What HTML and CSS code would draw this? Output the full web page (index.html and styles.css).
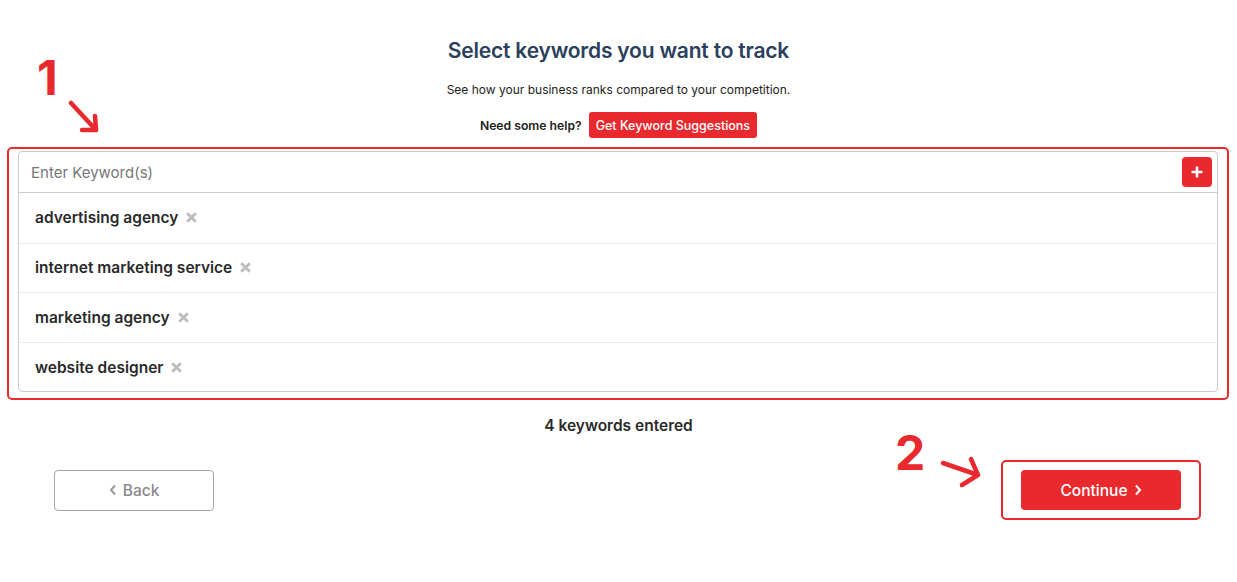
FILE: index.html
```html
<!DOCTYPE html>
<html lang="en">
<head>
<meta charset="utf-8">
<title>Select keywords</title>
<link rel="stylesheet" href="styles.css">
</head>
<body>
<div class="page">
  <header class="head">
    <h1 class="title">Select keywords you want to track</h1>
    <p class="subtitle">See how your business ranks compared to your competition.</p>
    <div class="help">
      <span class="help-label">Need some help?</span>
      <button class="suggest">Get Keyword Suggestions</button>
    </div>
  </header>

  <div class="highlight">
    <div class="kw-box">
      <div class="kw-input-row">
        <span class="placeholder">Enter Keyword(s)</span>
        <button class="add" aria-label="Add">
          <svg width="14" height="14" viewBox="0 0 14 14"><path d="M7 1.5v11M1.5 7h11" stroke="#fff" stroke-width="2.6" stroke-linecap="butt"/></svg>
        </button>
      </div>
      <ul class="kw-list">
        <li class="kw"><span>advertising agency</span><svg class="rm" viewBox="0 0 12 12"><path d="M2 2l8 8M10 2l-8 8" stroke="#bdbdbd" stroke-width="2.6"/></svg></li>
        <li class="kw"><span>internet marketing service</span><svg class="rm" viewBox="0 0 12 12"><path d="M2 2l8 8M10 2l-8 8" stroke="#bdbdbd" stroke-width="2.6"/></svg></li>
        <li class="kw"><span>marketing agency</span><svg class="rm" viewBox="0 0 12 12"><path d="M2 2l8 8M10 2l-8 8" stroke="#bdbdbd" stroke-width="2.6"/></svg></li>
        <li class="kw"><span>website designer</span><svg class="rm" viewBox="0 0 12 12"><path d="M2 2l8 8M10 2l-8 8" stroke="#bdbdbd" stroke-width="2.6"/></svg></li>
      </ul>
    </div>
  </div>

  <p class="count">4 keywords entered</p>

  <div class="nav">
    <button class="back">
      <svg width="8" height="12" viewBox="0 0 8 12"><path d="M6 1.5L2 6l4 4.5" fill="none" stroke="#999" stroke-width="2"/></svg>
      Back
    </button>
    <div class="cont-frame">
      <button class="continue">Continue
        <svg width="8" height="12" viewBox="0 0 8 12"><path d="M2 1.5L6 6l-4 4.5" fill="none" stroke="#fff" stroke-width="2"/></svg>
      </button>
    </div>
  </div>

  <div class="annot a1">1</div>
  <svg class="arrow arrow1" width="40" height="40" viewBox="0 0 40 40">
    <path d="M3 3L28 30M28 30L27 16M28 30L14 30" fill="none" stroke="#e8292e" stroke-width="4.5" stroke-linecap="round" stroke-linejoin="round"/>
  </svg>
  <div class="annot a2">2</div>
  <svg class="arrow arrow2" width="50" height="40" viewBox="0 0 50 40">
    <path d="M3 8L38 20M38 20L31 4M38 20L22 30" fill="none" stroke="#e8292e" stroke-width="4.5" stroke-linecap="round" stroke-linejoin="round"/>
  </svg>
</div>
</body>
</html>
```

FILE: styles.css
```css
* { box-sizing: border-box; }
html, body { margin: 0; padding: 0; background: #fff; }
body {
  font-family: Inter, "Noto Sans", "Liberation Sans", sans-serif;
  color: #222;
  width: 1237px;
  height: 582px;
  overflow: hidden;
}
.page { position: relative; width: 1237px; height: 582px; }

.head {
  display: flex;
  flex-direction: column;
  align-items: center;
  padding-top: 37px;
}
.title {
  margin: 0;
  font-size: 21px;
  line-height: 28px;
  font-weight: 600;
  color: #2b405c;
  letter-spacing: -0.2px;
}
.subtitle {
  margin: 17px 0 0;
  font-size: 12px;
  line-height: 16px;
  color: #222;
}
.help {
  display: flex;
  align-items: center;
  gap: 7px;
  margin-top: 14px;
}
.help-label { font-size: 12.2px; font-weight: 600; color: #222; }
.suggest {
  font-family: inherit;
  background: #e8292e;
  color: #fff;
  border: 0;
  border-radius: 3px;
  height: 26px;
  padding: 0 7px;
  font-size: 12.5px;
  font-weight: 500;
}

.highlight {
  margin: 9px 8px 0 7px;
  border: 2.5px solid #e8292e;
  border-radius: 5px;
  padding: 2px 9px 6px 9px;
}
.kw-box {
  border: 1px solid #ccc;
  border-radius: 4px;
}
.kw-input-row {
  display: flex;
  align-items: center;
  justify-content: space-between;
  height: 41px;
  padding: 0 5px 0 12px;
  border-bottom: 1px solid #ccc;
}
.placeholder { font-size: 15px; color: #777; font-weight: 400; }
.add {
  width: 30px;
  height: 30px;
  border: 0;
  border-radius: 4px;
  background: #e8292e;
  display: flex;
  align-items: center;
  justify-content: center;
  padding: 0;
}
.kw-list { list-style: none; margin: 0; padding: 0; }
.kw {
  display: flex;
  align-items: center;
  gap: 7px;
  height: 49.6px;
  padding-left: 16px;
  border-top: 1px solid #ececec;
  font-size: 15.5px;
  font-weight: 600;
  color: #2a2a2a;
}
.kw:first-child { border-top: 0; }
.rm { width: 13px; height: 13px; }

.count {
  margin: 16px 0 0;
  text-align: center;
  font-size: 15.5px;
  font-weight: 600;
  color: #2a2a2a;
}

.nav {
  display: flex;
  justify-content: space-between;
  align-items: center;
  margin-top: 25px;
  padding: 0 36px 0 54px;
}
.back {
  font-family: inherit;
  width: 160px;
  height: 41px;
  border: 1px solid #a6a6a6;
  border-radius: 4px;
  background: #fff;
  color: #8a8a8a;
  font-size: 15.5px;
  font-weight: 500;
  display: flex;
  align-items: center;
  justify-content: center;
  gap: 6px;
}
.cont-frame {
  border: 2px solid #e8292e;
  border-radius: 5px;
  padding: 8px 18px;
}
.continue {
  font-family: inherit;
  width: 160px;
  height: 40px;
  border: 0;
  border-radius: 4px;
  background: #e8292e;
  color: #fff;
  font-size: 15.5px;
  font-weight: 500;
  display: flex;
  align-items: center;
  justify-content: center;
  gap: 6px;
}

.annot {
  position: absolute;
  color: #e8292e;
  font-family: Inter, "Liberation Sans", sans-serif;
  font-weight: 700;
  font-size: 48px;
  line-height: 1;
}
.a1 { left: 37px; top: 54px; }
.a2 { left: 895px; top: 429px; }
.arrow { position: absolute; }
.arrow1 { left: 68px; top: 100px; }
.arrow2 { left: 940px; top: 455px; }
```
